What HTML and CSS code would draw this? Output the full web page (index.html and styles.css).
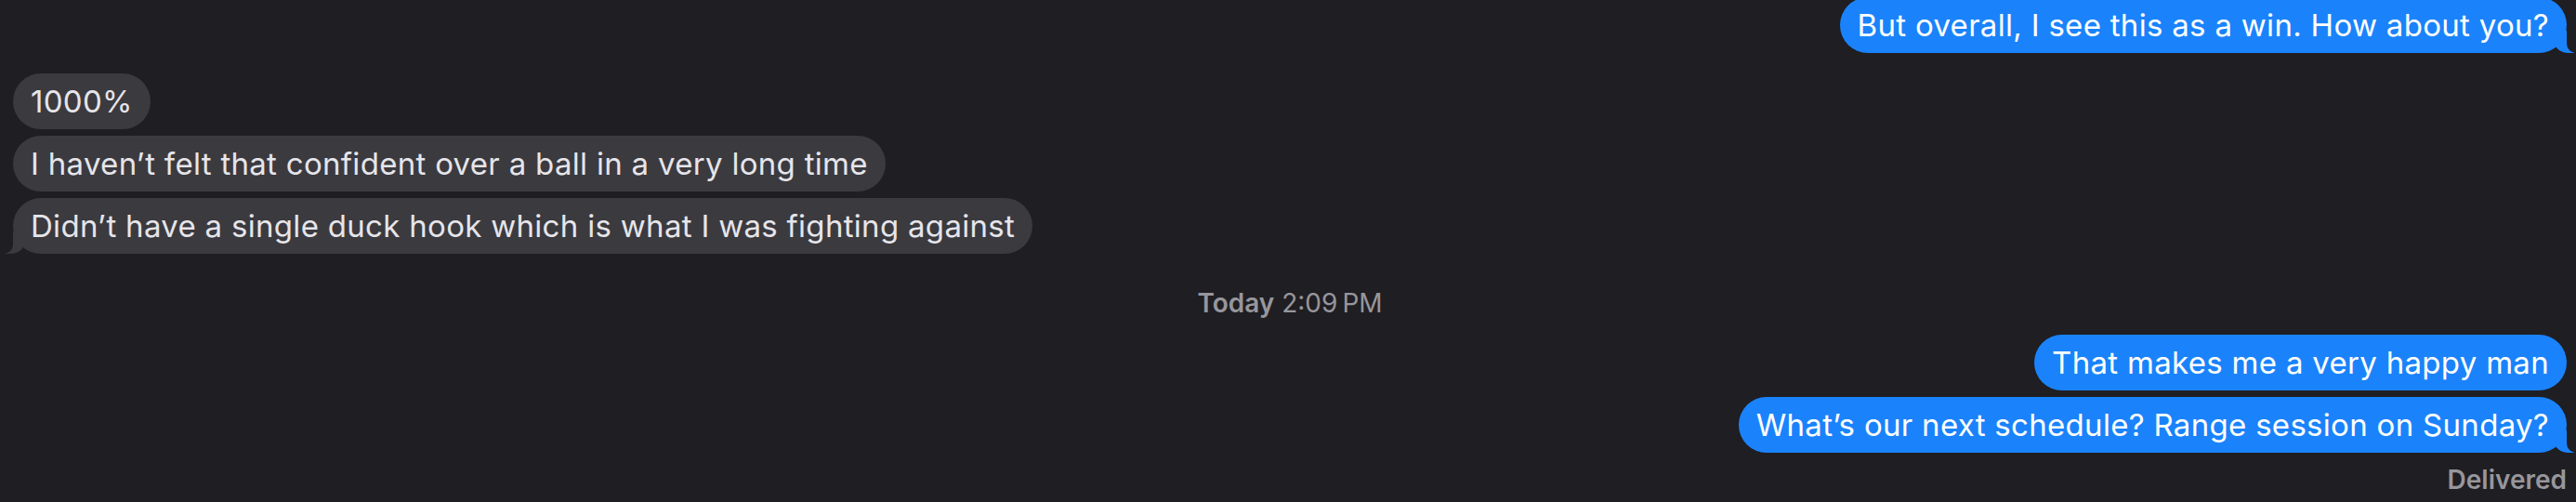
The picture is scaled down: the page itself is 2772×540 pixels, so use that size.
FILE: index.html
```html
<!DOCTYPE html>
<html lang="en">
<head>
    <meta charset="UTF-8">
    <meta name="viewport" content="width=device-width, initial-scale=1.0">
    <title>Messages</title>
    <link rel="stylesheet" href="styles.css">
</head>
<body>
    <div class="thread">
        <div class="group group-sent first-group">
            <div class="bubble sent tail">But overall, I see this as a win. How about you?</div>
        </div>

        <div class="group group-received">
            <div class="bubble received">1000%</div>
            <div class="bubble received">I haven’t felt that confident over a ball in a very long time</div>
            <div class="bubble received tail">Didn’t have a single duck hook which is what I was fighting against</div>
        </div>

        <div class="timestamp"><span class="timestamp-day">Today</span> 2:09&#8201;PM</div>

        <div class="group group-sent">
            <div class="bubble sent">That makes me a very happy man</div>
            <div class="bubble sent tail">What’s our next schedule? Range session on Sunday?</div>
        </div>

        <div class="status">Delivered</div>
    </div>
</body>
</html>
```

FILE: styles.css
```css
body {
    margin: 0;
    background-color: #1f1e22;
    font-family: "Inter", "Noto Sans", sans-serif;
    overflow: hidden;
}

.thread {
    display: flex;
    flex-direction: column;
    padding: 0 10px 0 14px;
}

.group {
    display: flex;
    flex-direction: column;
    gap: 7px;
}

.group-sent {
    align-items: flex-end;
    margin-top: 18px;
}

.group-received {
    align-items: flex-start;
    margin-top: 22px;
}

.first-group {
    margin-top: -3px;
}

.bubble {
    position: relative;
    font-size: 33px;
    line-height: 38px;
    letter-spacing: 0.3px;
    padding: 11px 19px;
    border-radius: 30px;
    white-space: nowrap;
}

.sent {
    background-color: #1a83fb;
    color: #ffffff;
}

.received {
    background-color: #3b3a3f;
    color: #e6e5ea;
}

/* little tail on the last bubble of a group */
.sent.tail::before {
    content: "";
    position: absolute;
    bottom: 0;
    right: -8px;
    width: 22px;
    height: 24px;
    background-color: #1a83fb;
    border-bottom-left-radius: 16px 14px;
}

.sent.tail::after {
    content: "";
    position: absolute;
    bottom: 0;
    right: -12px;
    width: 12px;
    height: 26px;
    background-color: #1f1e22;
    border-bottom-left-radius: 10px;
}

.received.tail::before {
    content: "";
    position: absolute;
    bottom: 0;
    left: -9px;
    width: 22px;
    height: 24px;
    background-color: #3b3a3f;
    border-bottom-right-radius: 16px 14px;
}

.received.tail::after {
    content: "";
    position: absolute;
    bottom: 0;
    left: -12px;
    width: 12px;
    height: 26px;
    background-color: #1f1e22;
    border-bottom-right-radius: 10px;
}

.timestamp {
    margin-top: 37px;
    text-align: center;
    font-size: 28px;
    line-height: 32px;
    color: #97969c;
}

.timestamp-day {
    font-weight: 600;
}

.status {
    margin-top: 13px;
    text-align: right;
    font-size: 28px;
    line-height: 32px;
    font-weight: 600;
    color: #97969c;
}
```
